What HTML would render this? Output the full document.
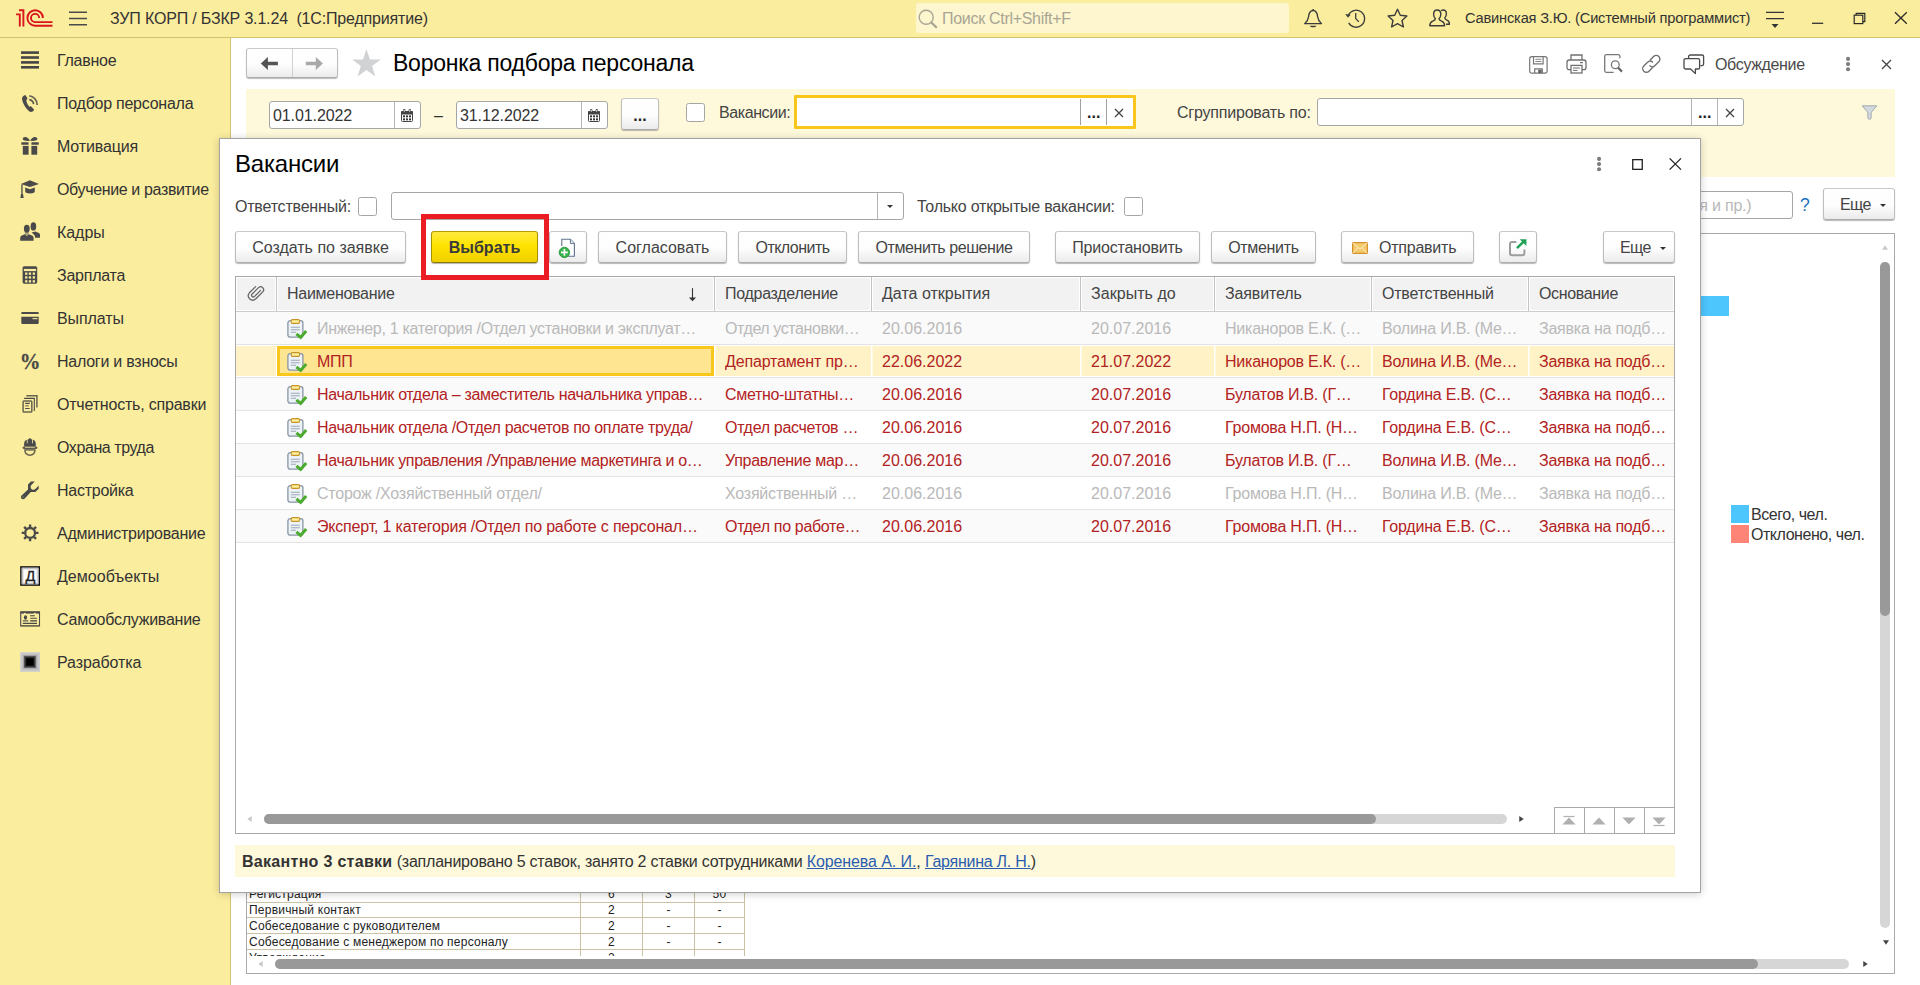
<!DOCTYPE html>
<html lang="ru">
<head>
<meta charset="utf-8">
<title>Воронка подбора персонала</title>
<style>
html,body{margin:0;padding:0}
body{width:1920px;height:985px;overflow:hidden;position:relative;background:#fff;font-family:"Liberation Sans",sans-serif;font-size:16px;color:#3f3f3f;line-height:18px}
.a{position:absolute;white-space:nowrap}
svg{position:absolute;overflow:visible}
/* top bar */
#top{left:0;top:0;width:1920px;height:37px;background:#fbed9e;border-bottom:1px solid #d2c170}
#side{left:0;top:38px;width:230px;height:947px;background:#fbed9e;border-right:1px solid #d3c274}
.sitem{left:57px;font-size:16px;color:#333}
/* buttons */
.btn{box-sizing:border-box;border:1px solid #c3c3c3;border-color:#c8c8c8 #bdbdbd #adadad;border-radius:3px;background:linear-gradient(#ffffff 0%,#fdfdfd 55%,#ebebeb 100%);box-shadow:0 1px 1px 0 rgba(0,0,0,0.28);color:#444;text-align:center;font-size:16px}
.inp{box-sizing:border-box;border:1px solid #a6a6a6;border-radius:3px;background:#fff}
.sep{width:1px;background:#b3b3b3}
.cb{box-sizing:border-box;border:1px solid #a6a6a6;border-radius:2.5px;background:#fff}
/* table */
.th{top:277px;height:34px;line-height:33px;color:#444}
.row{left:236px;width:1438px;height:33px;border-bottom:1px solid #e3e3e3;box-sizing:border-box}
.c{top:0;line-height:33px;height:32px}
.red{color:#b22222}
.gr{color:#b9b9b9}
</style>
</head>
<body>
<!-- ===== TOP BAR ===== -->
<div id="top" class="a">
<!-- 1C logo -->
<svg style="left:0;top:0" width="60" height="37" viewBox="0 0 60 37"><g fill="none" stroke="#d9141c" stroke-width="1.9"><path d="M19 10.2H23.4V26.6"/><path d="M16.1 14.4H19.8V26.6"/><path d="M42.9 18A7.75 7.75 0 1 0 35.1 25.75H52.5"/><path d="M39.2 18A4.1 4.1 0 1 0 35.1 22.1H52.5"/></g></svg>
<!-- hamburger -->
<svg style="left:69px;top:11px" width="18" height="15" viewBox="0 0 18 15"><g stroke="#4a4a4a" stroke-width="1.4"><path d="M0 1.2H18M0 7.5H18M0 13.8H18"/></g></svg>
<div class="a" id="apptitle" style="left:110px;top:10px;font-size:16px;color:#333;letter-spacing:-0.17px;white-space:pre">ЗУП КОРП / БЗКР 3.1.24  (1С:Предприятие)</div>
<!-- search -->
<div class="a" style="left:916px;top:3px;width:373px;height:30px;background:#fdf6cf;border-radius:3px"></div>
<svg style="left:918px;top:9px" width="20" height="20" viewBox="0 0 20 20"><circle cx="8.2" cy="8.2" r="7" fill="none" stroke="#a9a593" stroke-width="1.4"/><path d="M13.2 13.4L18.2 18.2" stroke="#a9a593" stroke-width="2.2" stroke-linecap="round"/></svg>
<div class="a" id="srch" style="left:942px;top:10px;font-size:16px;color:#a9a593;letter-spacing:-0.3px">Поиск Ctrl+Shift+F</div>
<!-- bell -->
<svg style="left:1304px;top:9px" width="19" height="19" viewBox="0 0 19 19"><path d="M0.7 14.7 C3 12.6 4.2 10.6 4.6 7.6 C5 3.6 6.6 1.5 9.1 1.5 C11.6 1.5 13.2 3.6 13.6 7.6 C14 10.6 15.2 12.6 17.5 14.7 Z" fill="none" stroke="#3c3c3c" stroke-width="1.3" stroke-linejoin="round"/><circle cx="9.1" cy="1" r="0.9" fill="#3c3c3c"/><path d="M5.8 16.7 H12.4 C11.6 18.8 6.6 18.8 5.8 16.7 Z" fill="#3c3c3c"/></svg>
<!-- history -->
<svg style="left:1345px;top:8px" width="21" height="20" viewBox="0 0 21 20"><path d="M3.3 7.4 A8.5 8.5 0 1 1 3.7 14.9" fill="none" stroke="#3c3c3c" stroke-width="1.3"/><path d="M0.2 6 L5.6 6.8 L3 9.8 Z" fill="#3c3c3c"/><path d="M10.7 5 V10.6 L13.8 13.8" fill="none" stroke="#3c3c3c" stroke-width="1.3"/></svg>
<!-- star -->
<svg style="left:1387px;top:8px" width="21" height="20" viewBox="0 0 21 20"><path d="M10.5 1.2 L13.3 7.3 L19.9 8 L15 12.5 L16.4 19 L10.5 15.7 L4.6 19 L6 12.5 L1.1 8 L7.7 7.3 Z" fill="none" stroke="#3c3c3c" stroke-width="1.4" stroke-linejoin="round"/></svg>
<!-- users -->
<svg style="left:1429px;top:9px" width="21" height="18" viewBox="0 0 21 18"><g fill="none" stroke="#3c3c3c" stroke-width="1.4" stroke-linejoin="round"><path d="M8.2 1 C10.6 1 11.8 2.8 11.8 5.2 C11.8 7.2 11 8.8 10 9.6 C10 11 10.8 11.6 12.6 12.2 C14.6 12.9 15.6 13.8 15.6 16.8 H0.8 C0.8 13.8 1.8 12.9 3.8 12.2 C5.6 11.6 6.4 11 6.4 9.6 C5.4 8.8 4.6 7.2 4.6 5.2 C4.6 2.8 5.8 1 8.2 1 Z"/><path d="M12.2 1.6 C12.8 1.2 13.4 1 14.2 1 C16.4 1 17.4 2.8 17.4 4.8 C17.4 6.6 16.8 8 15.8 8.8 C15.8 10 16.4 10.6 18 11.2 C19.6 11.8 20.4 12.6 20.4 15.2 H17"/></g></svg>
<div class="a" id="uname" style="left:1465px;top:9px;font-size:14.67px;color:#333;letter-spacing:-0.2px">Савинская З.Ю. (Системный программист)</div>
<!-- menu lines -->
<svg style="left:1766px;top:11px" width="18" height="17" viewBox="0 0 18 17"><path d="M0 1.4H18M0 7.6H18" stroke="#333" stroke-width="1.3"/><path d="M5.5 13.1H12.5L9 16.9Z" fill="#333"/></svg>
<!-- window controls -->
<svg style="left:1812px;top:22px" width="12" height="3" viewBox="0 0 12 3"><path d="M0 1.3H11.2" stroke="#333" stroke-width="1.3"/></svg>
<svg style="left:1853px;top:12px" width="13" height="13" viewBox="0 0 13 13"><g fill="none" stroke="#2a2a2a" stroke-width="1.2"><path d="M3.2 3V1.4H11.8V9.6H10"/><rect x="1.2" y="3.2" width="8.6" height="8.4"/></g></svg>
<svg style="left:1894px;top:11px" width="14" height="14" viewBox="0 0 14 14"><path d="M1 1.2L12.8 12.8M12.8 1.2L1 12.8" stroke="#2a2a2a" stroke-width="1.3"/></svg>
</div>
<!-- ===== SIDEBAR ===== -->
<div id="side" class="a"></div>
<svg style="left:20px;top:50px" width="21" height="21" viewBox="0 0 21 21"><g fill="#454545"><rect x="1" y="1.3" width="18" height="2.6"/><rect x="1" y="6.2" width="18" height="2.6"/><rect x="1" y="11.1" width="18" height="2.6"/><rect x="1" y="16" width="18" height="2.6"/></g></svg>
<div class="a sitem" style="top:52px;letter-spacing:-0.25px">Главное</div>
<svg style="left:20px;top:93px" width="21" height="21" viewBox="0 0 21 21"><path d="M5.4 2 L7.3 5.1 C7.6 5.8 7.2 6.5 6.3 7 C6.3 9 7.8 12 9.3 13.8 C10.2 13 11 13 11.5 13.8 L14 16.4 C14.2 17.6 12.4 18.9 10.6 18.9 C7 17.6 2.6 10.6 2 5.7 C2 4.2 3.6 2.2 5.4 2 Z" fill="#4a4a4a"/><path d="M9.3 6.7 A5.2 5.2 0 0 1 13.6 11.2" fill="none" stroke="#5f5b4c" stroke-width="1.7"/><path d="M9.3 2.9 A8.9 8.9 0 0 1 17.2 11.9" fill="none" stroke="#6b6755" stroke-width="1.7"/></svg>
<div class="a sitem" style="top:95px;letter-spacing:-0.25px">Подбор персонала</div>
<svg style="left:20px;top:136px" width="21" height="21" viewBox="0 0 21 21"><g fill="#4a4a4a"><rect x="1.3" y="6.2" width="7.3" height="2.6" rx="0.6"/><rect x="11.4" y="6.2" width="7.4" height="2.6" rx="0.6"/><rect x="2.8" y="9.9" width="5.8" height="8.8"/><rect x="11.4" y="9.9" width="5.8" height="8.8"/><path d="M10 4.8 C7 5 3 5 2.7 3 C2.5 1.2 5 0.4 6.6 1.2 C8.2 2 9.2 3.4 10 4.8 Z"/><path d="M10.1 4.8 C13.1 5 17.1 5 17.4 3 C17.6 1.2 15.1 0.4 13.5 1.2 C11.9 2 10.9 3.4 10.1 4.8 Z"/></g></svg>
<div class="a sitem" style="top:138px;letter-spacing:-0.15px">Мотивация</div>
<svg style="left:20px;top:179px" width="21" height="21" viewBox="0 0 21 21"><g fill="#4a4a4a"><path d="M1 5.1 L9.9 1.2 L19 4.9 L9.9 7.9 Z"/><path d="M5.2 8.6 L9.9 10.2 L14.8 8.6 V12.6 C14.8 15.2 5.2 15.2 5.2 12.6 Z"/><rect x="1.3" y="5.4" width="1.3" height="10"/><path d="M0.4 18.9 L1 15 H3 L3.7 18.9 Z"/></g></svg>
<div class="a sitem" style="top:181px;letter-spacing:-0.36px">Обучение и развитие</div>
<svg style="left:20px;top:222px" width="21" height="21" viewBox="0 0 21 21"><g fill="#4a4a4a"><ellipse cx="13.4" cy="4.4" rx="2.8" ry="4.2"/><path d="M11.6 10.6 C13 10.4 14.4 10 15.4 9.6 C17.4 10.6 20 11 20 12.8 V15.8 H15 V14.6 C15 13 13 12 11.6 10.6 Z"/><ellipse cx="6.8" cy="6.8" rx="2.9" ry="4"/><rect x="4.8" y="10.2" width="4" height="3.4" opacity="0.45"/><path d="M0.2 18.7 V15.4 C0.2 13.8 2.6 13.2 4.6 12.2 L6.8 14 L9 12.2 C11 13.2 13.6 13.8 13.6 15.4 V18.7 Z"/></g></svg>
<div class="a sitem" style="top:224px;letter-spacing:-0.05px">Кадры</div>
<svg style="left:20px;top:265px" width="21" height="21" viewBox="0 0 21 21"><rect x="2.6" y="1.2" width="14.6" height="17.5" rx="1.6" fill="#4a4a4a"/><g fill="#fbed9e"><rect x="3.9" y="3.9" width="12.2" height="2.2"/><rect x="5.1" y="7.5" width="2.3" height="2.3"/><rect x="5.1" y="11.3" width="2.3" height="2.3"/><rect x="5.1" y="15.2" width="2.3" height="2.3"/><rect x="8.8" y="7.5" width="2.3" height="2.3"/><rect x="8.8" y="11.3" width="2.3" height="2.3"/><rect x="8.8" y="15.2" width="2.3" height="2.3"/><rect x="12.7" y="7.5" width="2.3" height="2.3"/><rect x="12.7" y="11.3" width="2.3" height="2.3"/><rect x="12.7" y="15.2" width="2.3" height="2.3"/></g></svg>
<div class="a sitem" style="top:267px;letter-spacing:-0.25px">Зарплата</div>
<svg style="left:20px;top:308px" width="21" height="21" viewBox="0 0 21 21"><g fill="#4a4a4a"><path d="M2.1 4.1 H17.9 A0.8 0.8 0 0 1 18.7 4.9 V5.9 H1.3 V4.9 A0.8 0.8 0 0 1 2.1 4.1 Z"/><path d="M1.3 8.8 H18.7 V15.1 A0.8 0.8 0 0 1 17.9 15.9 H2.1 A0.8 0.8 0 0 1 1.3 15.1 Z"/></g><rect x="12.5" y="10.1" width="5" height="1.1" fill="#fbed9e"/></svg>
<div class="a sitem" style="top:310px;letter-spacing:-0.1px">Выплаты</div>
<svg style="left:20px;top:351px" width="21" height="21" viewBox="0 0 21 21"><text transform="translate(-0.3,17.8) scale(0.9,1)" font-family="Liberation Serif, serif" font-weight="bold" font-size="23" fill="#4a4a4a" stroke="#4a4a4a" stroke-width="0.3">%</text></svg>
<div class="a sitem" style="top:353px;letter-spacing:-0.25px">Налоги и взносы</div>
<svg style="left:20px;top:394px" width="21" height="21" viewBox="0 0 21 21"><g fill="none"><path d="M6.3 1.7 H16.9 V13.5" stroke="#69654f" stroke-width="1.5"/><path d="M4.1 4.4 H14.3 V17.1" stroke="#4a4a4a" stroke-width="1.1"/><rect x="3.1" y="6.9" width="8.7" height="11.1" rx="0.8" stroke="#69654f" stroke-width="1.5"/><path d="M5.2 9.3 H9.7 M5.2 14.5 H9.7" stroke="#4a4a4a" stroke-width="1.2"/><path d="M5.2 11.8 H8.8" stroke="#8a8468" stroke-width="1.4"/></g></svg>
<div class="a sitem" style="top:396px;letter-spacing:-0.2px">Отчетность, справки</div>
<svg style="left:20px;top:437px" width="21" height="21" viewBox="0 0 21 21"><path d="M4.1 9.6 V7 C4.1 4.6 5.4 3.2 6.8 2.8 V6.2 H7.6 V2.4 C8 2.2 8.6 2 9.1 1.9 V1.3 H10.7 V1.9 C11.2 2 11.8 2.2 12.2 2.4 V6.2 H13 V2.8 C14.4 3.2 15.8 4.6 15.8 7 V9.6 Z" fill="#4a4a4a"/><rect x="2.6" y="9.4" width="14.8" height="2.7" rx="1.3" fill="#5d5a4c"/><rect x="5" y="10.1" width="9.8" height="0.8" fill="#d9cf96"/><path d="M4.2 12 H15.6 L15.2 13.8 H4.6 Z" fill="#7a7560"/><path d="M4.7 13.2 C5.2 16.4 7.4 18.2 9.9 18.2 C12.4 18.2 14.6 16.4 15.1 13.2" fill="none" stroke="#6b6650" stroke-width="1.5"/></svg>
<div class="a sitem" style="top:439px;letter-spacing:-0.42px">Охрана труда</div>
<svg style="left:20px;top:480px" width="21" height="21" viewBox="0 0 21 21"><path d="M10.9 1.5 H14.8 L10.9 5.4 C10.2 7 10.8 8.6 12 9.4 C13.2 10.2 14.6 9.8 15.4 9 L18.7 5.4 V8.8 L15.4 12 H10.8 L5 18.3 C4 19.4 2.2 19.4 1.4 18.4 C0.6 17.4 0.8 16 1.8 15.2 L8 9.6 V4.4 Z" fill="#4a4a4a"/><circle cx="2.9" cy="17" r="0.8" fill="#8a8468"/></svg>
<div class="a sitem" style="top:482px;letter-spacing:-0.25px">Настройка</div>
<svg style="left:20px;top:523px" width="21" height="21" viewBox="0 0 21 21"><circle cx="10.1" cy="9.9" r="4.9" fill="none" stroke="#4a4a4a" stroke-width="2.3"/><path d="M15.70 9.90L18.50 9.90M14.06 13.86L16.04 15.84M10.10 15.50L10.10 18.30M6.14 13.86L4.16 15.84M4.50 9.90L1.70 9.90M6.14 5.94L4.16 3.96M10.10 4.30L10.10 1.50M14.06 5.94L16.04 3.96" stroke="#4a4a4a" stroke-width="2.4" fill="none"/></svg>
<div class="a sitem" style="top:525px;letter-spacing:-0.25px">Администрирование</div>
<svg style="left:20px;top:566px" width="21" height="21" viewBox="0 0 21 21"><rect x="0.95" y="0.95" width="18.3" height="18.1" fill="#fff" stroke="#0a0a0f" stroke-width="1.5"/><rect x="2.3" y="2.3" width="15.6" height="15.4" fill="none" stroke="#b5b5b5" stroke-width="1.2"/><rect x="3.3" y="3.3" width="13.6" height="13.4" fill="none" stroke="#e3e3e3" stroke-width="1"/><text x="10.3" y="15.2" text-anchor="middle" font-family="Liberation Sans, sans-serif" font-weight="normal" font-size="14.5" fill="#222" stroke="#222" stroke-width="0.3">Д</text></svg>
<div class="a sitem" style="top:568px;letter-spacing:0.02px">Демообъекты</div>
<svg style="left:20px;top:609px" width="21" height="21" viewBox="0 0 21 21"><rect x="0.7" y="2.8" width="18.8" height="14.1" fill="none" stroke="#4a4a4a" stroke-width="1.1"/><rect x="0.7" y="2.8" width="18.8" height="1.8" fill="#4a4a4a"/><rect x="0.7" y="16.2" width="18.8" height="1.2" fill="#69654f"/><circle cx="4.9" cy="4.8" r="1" fill="#fbed9e"/><circle cx="14.9" cy="4.8" r="1" fill="#fbed9e"/><ellipse cx="5.5" cy="8.5" rx="1.6" ry="2.3" fill="#4a4a4a"/><rect x="2.8" y="11.2" width="5.5" height="1.3" fill="#6b6755"/><path d="M10.2 9.3 H17 M2.8 14.4 H17" stroke="#4a4a4a" stroke-width="1.1"/><path d="M10.2 6.7 H14.8" stroke="#69654f" stroke-width="1.3"/><path d="M10.2 11.8 H17" stroke="#69654f" stroke-width="1.6"/></svg>
<div class="a sitem" style="top:611px;letter-spacing:-0.25px">Самообслуживание</div>
<svg style="left:20px;top:652px" width="21" height="21" viewBox="0 0 21 21"><rect x="0.2" y="0.2" width="19.8" height="19.6" fill="#cbcbd0"/><rect x="1.8" y="1.8" width="16.6" height="16.4" fill="#c2c2c2"/><rect x="3" y="3" width="14.2" height="14" fill="#ababab"/><rect x="3.9" y="3.9" width="12" height="12" fill="#5c5c5c"/><rect x="4.8" y="4.8" width="10.2" height="10.2" fill="#3a3a3a"/><rect x="5.7" y="5.7" width="8.4" height="8.4" fill="#161616"/><rect x="6.5" y="6.5" width="6.8" height="6.8" fill="#000"/></svg>
<div class="a sitem" style="top:654px;letter-spacing:-0.1px">Разработка</div>
<!-- ===== BACKGROUND FORM ===== -->
<div id="bg">
<!-- nav buttons -->
<div class="a btn" style="left:246px;top:48px;width:92px;height:30px"></div>
<div class="a" style="left:292px;top:49px;width:1px;height:28px;background:#d0d0d0"></div>
<svg style="left:260px;top:56px" width="19" height="15" viewBox="0 0 19 15"><path d="M0.8 7.5L7.9 1V5.8H17.9V9.2H7.9V14Z" fill="#555"/></svg>
<svg style="left:305px;top:56px" width="19" height="15" viewBox="0 0 19 15"><path d="M17.9 7.5L10.8 1V5.8H0.8V9.2H10.8V14Z" fill="#a9a9a9"/></svg>
<svg style="left:352px;top:49px" width="29" height="28" viewBox="0 0 29 28"><path d="M14.45 0.10L17.92 10.43L28.81 10.53L20.06 17.02L23.33 27.42L14.45 21.10L5.57 27.42L8.84 17.02L0.09 10.53L10.98 10.43Z" fill="#d0d2d3"/></svg>
<div class="a" id="ftitle" style="left:393px;top:50px;font-size:23px;line-height:26px;color:#000;letter-spacing:-0.23px">Воронка подбора персонала</div>
<!-- form toolbar icons -->
<svg style="left:1529px;top:56px" width="19" height="18" viewBox="0 0 19 18"><g fill="none" stroke="#777" stroke-width="1.2"><rect x="0.7" y="0.7" width="17.4" height="16.5" rx="2.2"/><path d="M4.5 0.7V7.8H14.1V0.7"/><path d="M6.4 3.3H12.4M6.4 5.5H12.4" stroke-width="0.9"/><path d="M5.7 17.2V12.9H13.3V17.2"/></g><rect x="9.2" y="13.6" width="3.5" height="3.6" fill="#666"/></svg>
<svg style="left:1566px;top:54px" width="21" height="20" viewBox="0 0 21 20"><g fill="none" stroke="#707070" stroke-width="1.3"><path d="M5 6V1H16V6"/><rect x="1" y="6" width="19" height="9.6" rx="2.2"/><rect x="5" y="11.4" width="11" height="7.6" fill="#fff"/><path d="M7 14H14M7 16.4H11.6" stroke-width="1"/><path d="M14 8.6H17" stroke-width="1.2"/></g></svg>
<svg style="left:1604px;top:54px" width="20" height="20" viewBox="0 0 20 20"><g fill="none" stroke="#777" stroke-width="1.3"><path d="M15.9 4.2V2.2A1.5 1.5 0 0 0 14.4 0.7H2.2A1.5 1.5 0 0 0 0.7 2.2V16.8A1.5 1.5 0 0 0 2.2 18.3H9.6"/><circle cx="11.3" cy="10.8" r="3.9"/><path d="M14 13.6L18 17.6" stroke-width="2.2" stroke="#666"/></g></svg>
<svg style="left:1641px;top:54px" width="21" height="20" viewBox="0 0 21 20"><g fill="none" stroke="#707070" stroke-width="1.4" stroke-linecap="round"><path d="M9.2 6 L12.6 2.6 A3.6 3.6 0 0 1 17.8 7.8 L14 11.6 A3.6 3.6 0 0 1 9 11.8"/><path d="M11.4 13.8 L8 17.2 A3.6 3.6 0 0 1 2.8 12 L6.6 8.2 A3.6 3.6 0 0 1 11.6 8"/></g></svg>
<svg style="left:1683px;top:54px" width="22" height="21" viewBox="0 0 22 21"><g fill="none" stroke="#4a4a4a" stroke-width="1.3" stroke-linejoin="round"><path d="M5.6 4.6 V2.6 A1.6 1.6 0 0 1 7.2 1 H19 A1.6 1.6 0 0 1 20.6 2.6 V10 A1.6 1.6 0 0 1 19 11.6 H17.4"/><path d="M2.6 4.6 H15 A1.6 1.6 0 0 1 16.6 6.2 V13.4 A1.6 1.6 0 0 1 15 15 H12.4 V19.6 L7.6 15 H2.6 A1.6 1.6 0 0 1 1 13.4 V6.2 A1.6 1.6 0 0 1 2.6 4.6 Z"/></g></svg>
<div class="a" id="obs" style="left:1715px;top:56px;color:#4a4a4a;letter-spacing:-0.35px">Обсуждение</div>
<svg style="left:1845px;top:57px" width="6" height="15" viewBox="0 0 6 15"><g fill="#7c7c7c"><circle cx="3.05" cy="1.9" r="2.05"/><circle cx="3.05" cy="7.1" r="2.05"/><circle cx="3.05" cy="12.2" r="2.05"/></g></svg>
<svg style="left:1881px;top:59px" width="11" height="11" viewBox="0 0 11 11"><path d="M1 1L10 10M10 1L1 10" stroke="#444" stroke-width="1.3"/></svg>
<!-- filter strip -->
<div class="a" style="left:246px;top:89px;width:1649px;height:88px;background:#fff9dc"></div>
<div class="a inp" style="left:269px;top:101px;width:152px;height:28px"></div>
<div class="a sep" style="left:394px;top:102px;height:26px"></div>
<div class="a" style="left:273px;top:107px;color:#333;letter-spacing:-0.1px">01.01.2022</div>
<svg style="left:401px;top:109px" width="12" height="13" viewBox="0 0 12 13"><rect x="0.5" y="2.5" width="11" height="10" rx="1" fill="#fff" stroke="#444" stroke-width="1"/><path d="M0 5.6V3A1 1 0 0 1 1 2H11A1 1 0 0 1 12 3V5.6Z" fill="#444"/><g fill="#444"><rect x="2" y="0" width="2.4" height="4" rx="1.2"/><rect x="7.6" y="0" width="2.4" height="4" rx="1.2"/></g><g fill="#fff"><rect x="2.8" y="0.8" width="0.8" height="2.2" rx="0.4"/><rect x="8.4" y="0.8" width="0.8" height="2.2" rx="0.4"/></g><g fill="#333"><rect x="2" y="6.4" width="2" height="1.9"/><rect x="5" y="6.4" width="2" height="1.9"/><rect x="8" y="6.4" width="2" height="1.9"/><rect x="2" y="9.4" width="2" height="1.9"/><rect x="5" y="9.4" width="2" height="1.9"/><rect x="8" y="9.4" width="2" height="1.9"/></g></svg>
<div class="a" style="left:434px;top:107px;color:#333">–</div>
<div class="a inp" style="left:456px;top:101px;width:152px;height:28px"></div>
<div class="a sep" style="left:581px;top:102px;height:26px"></div>
<div class="a" style="left:460px;top:107px;color:#333;letter-spacing:-0.1px">31.12.2022</div>
<svg style="left:588px;top:109px" width="12" height="13" viewBox="0 0 12 13"><rect x="0.5" y="2.5" width="11" height="10" rx="1" fill="#fff" stroke="#444" stroke-width="1"/><path d="M0 5.6V3A1 1 0 0 1 1 2H11A1 1 0 0 1 12 3V5.6Z" fill="#444"/><g fill="#444"><rect x="2" y="0" width="2.4" height="4" rx="1.2"/><rect x="7.6" y="0" width="2.4" height="4" rx="1.2"/></g><g fill="#fff"><rect x="2.8" y="0.8" width="0.8" height="2.2" rx="0.4"/><rect x="8.4" y="0.8" width="0.8" height="2.2" rx="0.4"/></g><g fill="#333"><rect x="2" y="6.4" width="2" height="1.9"/><rect x="5" y="6.4" width="2" height="1.9"/><rect x="8" y="6.4" width="2" height="1.9"/><rect x="2" y="9.4" width="2" height="1.9"/><rect x="5" y="9.4" width="2" height="1.9"/><rect x="8" y="9.4" width="2" height="1.9"/></g></svg>
<div class="a btn" style="left:621px;top:98px;width:38px;height:32px;line-height:33px;color:#222;font-weight:bold">...</div>
<div class="a cb" style="left:686px;top:103px;width:19px;height:19px"></div>
<div class="a" style="left:719px;top:104px;color:#444;letter-spacing:-0.42px">Вакансии:</div>
<div class="a" style="left:794px;top:95px;width:342px;height:34px;box-sizing:border-box;border:3px solid #f9c71c;border-radius:1px;background:#fff"></div>
<div class="a sep" style="left:1080px;top:99px;height:26px;background:#a0a0a0"></div>
<div class="a sep" style="left:1106px;top:99px;height:26px;background:#a0a0a0"></div>
<div class="a" style="left:1087px;top:104px;color:#222;font-weight:bold">...</div>
<svg style="left:1114px;top:108px" width="10" height="10" viewBox="0 0 10 10"><path d="M1 1L9 9M9 1L1 9" stroke="#444" stroke-width="1.3"/></svg>
<div class="a" style="left:1177px;top:104px;color:#444;letter-spacing:-0.2px">Сгруппировать по:</div>
<div class="a inp" style="left:1317px;top:98px;width:427px;height:28px"></div>
<div class="a sep" style="left:1691px;top:99px;height:26px"></div>
<div class="a sep" style="left:1717px;top:99px;height:26px"></div>
<div class="a" style="left:1698px;top:104px;color:#222;font-weight:bold">...</div>
<svg style="left:1725px;top:108px" width="10" height="10" viewBox="0 0 10 10"><path d="M1 1L9 9M9 1L1 9" stroke="#444" stroke-width="1.3"/></svg>
<svg style="left:1861px;top:105px" width="17" height="15" viewBox="0 0 17 15"><path d="M1.2 0.8H15.8L10.2 7.4V12.6A1.7 1.7 0 0 1 6.8 12.6V7.4Z" fill="#d3d9df" stroke="#9aa4ae" stroke-width="0.9" stroke-linejoin="round"/></svg>
<!-- bg search + more -->
<div class="a inp" style="left:1500px;top:191px;width:293px;height:28px"></div>
<div class="a" style="left:1597px;top:197px;color:#b8b8b8;letter-spacing:-0.2px">(наименования и пр.)</div>
<div class="a" style="left:1800px;top:196px;color:#1a70c0;font-size:17.5px">?</div>
<div class="a btn" style="left:1823px;top:188px;width:72px;height:32px;line-height:31px;text-align:left;padding-left:16px;color:#444;letter-spacing:-0.55px">Еще</div>
<svg style="left:1880px;top:204px" width="6" height="3" viewBox="0 0 8 4"><path d="M0 0H8L4 4Z" fill="#333"/></svg>
<!-- bg document area -->
<div class="a" style="left:246px;top:233px;width:1649px;height:741px;box-sizing:border-box;border:1px solid #a9a9a9;background:#fff"></div>
<div class="a" style="left:1600px;top:296px;width:129px;height:20px;background:#4dc6fd"></div>
<div class="a" style="left:1731px;top:505px;width:18px;height:18px;background:#4dc6fd"></div>
<div class="a" style="left:1731px;top:525px;width:18px;height:18px;background:#fd8477"></div>
<div class="a" style="left:1751px;top:506px;color:#333;letter-spacing:-0.45px">Всего, чел.</div>
<div class="a" style="left:1751px;top:526px;color:#333;letter-spacing:-0.45px">Отклонено, чел.</div>
<!-- bg scrollbars -->
<svg style="left:1882px;top:245px" width="6" height="5" viewBox="0 0 8 6"><path d="M0 6H8L4 0Z" fill="#c9c9c9"/></svg>
<div class="a" style="left:1880px;top:262px;width:10px;height:666px;border-radius:5px;background:#d6d6d6"></div>
<div class="a" style="left:1880px;top:262px;width:10px;height:354px;border-radius:5px;background:#999"></div>
<svg style="left:1883px;top:940px" width="6" height="5" viewBox="0 0 8 6"><path d="M0 0H8L4 6Z" fill="#444"/></svg>
<svg style="left:258px;top:961px" width="5" height="6" viewBox="0 0 6 8"><path d="M6 0V8L0 4Z" fill="#c9c9c9"/></svg>
<div class="a" style="left:275px;top:959px;width:1574px;height:10px;border-radius:5px;background:#d6d6d6"></div>
<div class="a" style="left:275px;top:959px;width:1483px;height:10px;border-radius:5px;background:#999"></div>
<svg style="left:1863px;top:961px" width="5" height="6" viewBox="0 0 6 8"><path d="M0 0V8L6 4Z" fill="#444"/></svg>
<!-- bg spreadsheet -->
<div class="a" id="sheet" style="left:247px;top:885px;width:520px;height:71px;overflow:hidden;font-size:12px;line-height:14px;color:#222;letter-spacing:0.22px">
<div class="a" style="left:0;top:0;width:497px;height:16px;border-top:1px solid #cbc2a4;border-bottom:1px solid #cbc2a4"></div>
<div class="a" style="left:0;top:32px;width:497px;height:15px;border-top:1px solid #cbc2a4;border-bottom:1px solid #cbc2a4"></div>
<div class="a" style="left:0;top:64px;width:497px;height:15px;border-top:1px solid #cbc2a4"></div>
<div class="a" style="left:333px;top:0;width:1px;height:80px;background:#cbc2a4"></div>
<div class="a" style="left:395px;top:0;width:1px;height:80px;background:#cbc2a4"></div>
<div class="a" style="left:447px;top:0;width:1px;height:80px;background:#cbc2a4"></div>
<div class="a" style="left:497px;top:0;width:1px;height:80px;background:#cbc2a4"></div>
<div class="a" style="left:2px;top:2px">Регистрация</div><div class="a" style="left:334px;top:2px;width:61px;text-align:center">6</div><div class="a" style="left:396px;top:2px;width:51px;text-align:center">3</div><div class="a" style="left:448px;top:2px;width:49px;text-align:center">50</div>
<div class="a" style="left:2px;top:18px">Первичный контакт</div><div class="a" style="left:334px;top:18px;width:61px;text-align:center">2</div><div class="a" style="left:396px;top:18px;width:51px;text-align:center">-</div><div class="a" style="left:448px;top:18px;width:49px;text-align:center">-</div>
<div class="a" style="left:2px;top:34px">Собеседование с руководителем</div><div class="a" style="left:334px;top:34px;width:61px;text-align:center">2</div><div class="a" style="left:396px;top:34px;width:51px;text-align:center">-</div><div class="a" style="left:448px;top:34px;width:49px;text-align:center">-</div>
<div class="a" style="left:2px;top:50px">Собеседование с менеджером по персоналу</div><div class="a" style="left:334px;top:50px;width:61px;text-align:center">2</div><div class="a" style="left:396px;top:50px;width:51px;text-align:center">-</div><div class="a" style="left:448px;top:50px;width:49px;text-align:center">-</div>
<div class="a" style="left:2px;top:66px">Утверждение</div><div class="a" style="left:334px;top:66px;width:61px;text-align:center">2</div><div class="a" style="left:396px;top:66px;width:51px;text-align:center">-</div><div class="a" style="left:448px;top:66px;width:49px;text-align:center">-</div>
</div>
</div>
<!-- ===== DIALOG ===== -->
<div id="dlg">
<div class="a" style="left:219px;top:138px;width:1482px;height:755px;box-sizing:border-box;border:1px solid #a3a3a3;background:#fff;box-shadow:0 1px 8px rgba(0,0,0,0.2)"></div>
<div class="a" id="dtitle" style="left:235px;top:151px;font-size:24px;line-height:26px;color:#000;letter-spacing:-0.2px">Вакансии</div>
<svg style="left:1596px;top:157px" width="6" height="15" viewBox="0 0 6 15"><g fill="#7c7c7c"><circle cx="3.05" cy="1.9" r="2.05"/><circle cx="3.05" cy="7.1" r="2.05"/><circle cx="3.05" cy="12.2" r="2.05"/></g></svg>
<svg style="left:1632px;top:159px" width="12" height="11" viewBox="0 0 12 11"><rect x="0.75" y="0.65" width="9.5" height="9.7" fill="none" stroke="#222" stroke-width="1.3"/></svg>
<svg style="left:1669px;top:158px" width="13" height="12" viewBox="0 0 13 12"><path d="M0.6 0.4L12 11.6M12 0.4L0.6 11.6" stroke="#222" stroke-width="1.3"/></svg>
<div class="a" style="left:235px;top:198px;color:#444;letter-spacing:-0.2px">Ответственный:</div>
<div class="a cb" style="left:358px;top:197px;width:19px;height:19px"></div>
<div class="a inp" style="left:391px;top:192px;width:513px;height:28px"></div>
<div class="a sep" style="left:877px;top:193px;height:26px"></div>
<svg style="left:887px;top:205px" width="6" height="3" viewBox="0 0 8 4"><path d="M0 0H8L4 4Z" fill="#333"/></svg>
<div class="a" style="left:917px;top:198px;color:#444;letter-spacing:-0.22px">Только открытые вакансии:</div>
<div class="a cb" style="left:1124px;top:197px;width:19px;height:19px"></div>
<div class="a btn" style="left:235px;top:231px;width:171px;height:32px;line-height:31px;letter-spacing:0px">Создать по заявке</div>
<div class="a btn" style="left:598px;top:231px;width:129px;height:32px;line-height:31px;letter-spacing:0px">Согласовать</div>
<div class="a btn" style="left:738px;top:231px;width:109px;height:32px;line-height:31px;letter-spacing:-0.53px">Отклонить</div>
<div class="a btn" style="left:858px;top:231px;width:172px;height:32px;line-height:31px;letter-spacing:-0.43px">Отменить решение</div>
<div class="a btn" style="left:1055px;top:231px;width:145px;height:32px;line-height:31px;letter-spacing:-0.2px">Приостановить</div>
<div class="a btn" style="left:1211px;top:231px;width:105px;height:32px;line-height:31px;letter-spacing:-0.33px">Отменить</div>
<div class="a btn" style="left:431px;top:231px;width:107px;height:32px;line-height:31px;font-weight:bold;color:#3a3a3a;background:linear-gradient(#ffea3e 0%,#ffe400 45%,#f0cf00 100%);border-color:#b39b00 #a89100 #8e7a00;box-shadow:0 1px 1px 0 rgba(0,0,0,0.3);letter-spacing:0px">Выбрать</div>
<div class="a" style="left:421px;top:214px;width:128px;height:66px;box-sizing:border-box;border:5px solid #ec1c24;z-index:5"></div>
<div class="a btn" style="left:549px;top:231px;width:38px;height:32px"></div>
<svg style="left:558px;top:237px" width="18" height="21" viewBox="0 0 18 21"><path d="M3.8 9V2.3H12.4L16.4 6.4V19.2H10" fill="#fff" stroke="#5f728c" stroke-width="1.1"/><path d="M12.4 2.3V6.4H16.4" fill="#eef2f6" stroke="#5f728c" stroke-width="1"/><circle cx="6.4" cy="15.4" r="5.2" fill="#3db34f" stroke="#1f9636" stroke-width="0.9"/><path d="M6.4 12V18.8M3 15.4H9.8" stroke="#fff" stroke-width="1.6"/></svg>
<div class="a btn" style="left:1341px;top:231px;width:133px;height:32px;line-height:31px;text-align:left;padding-left:37px;letter-spacing:-0.23px">Отправить</div>
<svg style="left:1352px;top:242px" width="16" height="12" viewBox="0 0 16 12"><rect x="0.6" y="0.6" width="14.8" height="10.8" rx="1" fill="#f6c96c" stroke="#d4922a" stroke-width="1.2"/><path d="M1 1L8 7L15 1M1 11L6 5.6M15 11L10 5.6" fill="none" stroke="#fdf0d0" stroke-width="1"/></svg>
<div class="a btn" style="left:1499px;top:231px;width:38px;height:32px"></div>
<svg style="left:1508px;top:238px" width="20" height="20" viewBox="0 0 20 20"><path d="M8.4 3.9H4A2 2 0 0 0 2 5.9V15.3A2 2 0 0 0 4 17.3H14.4A2 2 0 0 0 16.4 15.3V11.6" fill="none" stroke="#9d9d9d" stroke-width="2"/><path d="M9 10.2L16.4 2.8" fill="none" stroke="#1fa055" stroke-width="2.4"/><path d="M11.6 1.2H18.4V8Z" fill="#1fa055"/></svg>
<div class="a btn" style="left:1603px;top:231px;width:72px;height:32px;line-height:31px;text-align:left;padding-left:16px;color:#444;letter-spacing:-0.55px">Еще</div>
<svg style="left:1660px;top:247px" width="6" height="3" viewBox="0 0 8 4"><path d="M0 0H8L4 4Z" fill="#333"/></svg>
<div class="a" style="left:235px;top:276px;width:1440px;height:558px;box-sizing:border-box;border:1px solid #a9a9a9;background:#fff"></div>
<div class="a" style="left:236px;top:277px;width:1438px;height:34px;background:#f2f2f2;border-bottom:1px solid #cdcdcd;box-shadow:inset 0 0 0 1px #fff"></div>
<div class="a" style="left:275px;top:277px;width:3px;height:34px;background:linear-gradient(90deg,#fff 0,#fff 1px,#c4c4c4 1px,#c4c4c4 2px,#fff 2px,#fff 3px)"></div>
<div class="a" style="left:713px;top:277px;width:3px;height:34px;background:linear-gradient(90deg,#fff 0,#fff 1px,#c4c4c4 1px,#c4c4c4 2px,#fff 2px,#fff 3px)"></div>
<div class="a" style="left:870px;top:277px;width:3px;height:34px;background:linear-gradient(90deg,#fff 0,#fff 1px,#c4c4c4 1px,#c4c4c4 2px,#fff 2px,#fff 3px)"></div>
<div class="a" style="left:1079px;top:277px;width:3px;height:34px;background:linear-gradient(90deg,#fff 0,#fff 1px,#c4c4c4 1px,#c4c4c4 2px,#fff 2px,#fff 3px)"></div>
<div class="a" style="left:1213px;top:277px;width:3px;height:34px;background:linear-gradient(90deg,#fff 0,#fff 1px,#c4c4c4 1px,#c4c4c4 2px,#fff 2px,#fff 3px)"></div>
<div class="a" style="left:1370px;top:277px;width:3px;height:34px;background:linear-gradient(90deg,#fff 0,#fff 1px,#c4c4c4 1px,#c4c4c4 2px,#fff 2px,#fff 3px)"></div>
<div class="a" style="left:1527px;top:277px;width:3px;height:34px;background:linear-gradient(90deg,#fff 0,#fff 1px,#c4c4c4 1px,#c4c4c4 2px,#fff 2px,#fff 3px)"></div>
<div class="a th" style="left:287px;letter-spacing:-0.28px">Наименование</div>
<div class="a th" style="left:725px;letter-spacing:-0.28px">Подразделение</div>
<div class="a th" style="left:882px;letter-spacing:0px">Дата открытия</div>
<div class="a th" style="left:1091px;letter-spacing:0.05px">Закрыть до</div>
<div class="a th" style="left:1225px;letter-spacing:-0.12px">Заявитель</div>
<div class="a th" style="left:1382px;letter-spacing:-0.2px">Ответственный</div>
<div class="a th" style="left:1539px;letter-spacing:-0.34px">Основание</div>
<svg style="left:248px;top:285px" width="16" height="17" viewBox="0 0 16 17"><path d="M12.6 5.4L6.4 11.6A1.7 1.7 0 0 1 4 9.2L10.8 2.4A3 3 0 0 1 15 6.6L7.6 14A4.4 4.4 0 0 1 1.4 7.8L7.6 1.6" fill="none" stroke="#666" stroke-width="1.3" stroke-linecap="round"/></svg>
<svg style="left:688px;top:288px" width="9" height="14" viewBox="0 0 9 14"><path d="M4.5 0.2V10" fill="none" stroke="#333" stroke-width="1.1"/><path d="M0.9 9.4H8.1L4.5 13.3Z" fill="#333"/></svg>
<div class="a row" style="top:312px;background:#fafafa"></div>
<svg style="left:287px;top:319px" width="21" height="21" viewBox="0 0 21 21"><rect x="0.9" y="1.7" width="15" height="16.5" rx="2.2" fill="#edf2f7" stroke="#8895a5" stroke-width="1.3"/><rect x="4.2" y="0.6" width="8.4" height="3.8" rx="1.3" fill="#fbf29a" stroke="#c8922a" stroke-width="1.1"/><path d="M3.8 8.2H12.8M3.8 10.7H12.8M3.8 13.3H9" stroke="#9aa8b6" stroke-width="1.1"/><path d="M9.4 14.8L13.6 18.4L19.2 12" fill="none" stroke="#4bab2d" stroke-width="3"/></svg>
<div class="a c gr" style="left:317px;top:312px;width:395px;overflow:hidden;letter-spacing:-0.31px">Инженер, 1 категория /Отдел установки и эксплуат…</div>
<div class="a c gr" style="left:725px;top:312px;width:145px;overflow:hidden;letter-spacing:-0.4px">Отдел установки…</div>
<div class="a c gr" style="left:882px;top:312px;width:190px;overflow:hidden;letter-spacing:0px">20.06.2016</div>
<div class="a c gr" style="left:1091px;top:312px;width:120px;overflow:hidden;letter-spacing:0px">20.07.2016</div>
<div class="a c gr" style="left:1225px;top:312px;width:145px;overflow:hidden;letter-spacing:-0.22px">Никаноров Е.К. (…</div>
<div class="a c gr" style="left:1382px;top:312px;width:145px;overflow:hidden;letter-spacing:-0.22px">Волина И.В. (Ме…</div>
<div class="a c gr" style="left:1539px;top:312px;width:135px;overflow:hidden;letter-spacing:-0.22px">Заявка на подб…</div>
<div class="a row" style="top:345px;background:#fff"></div><div class="a" style="left:236px;top:346px;width:1438px;height:30px;background:#fff2c6"></div><div class="a" style="left:276px;top:346px;width:1px;height:30px;background:#fff"></div>
<div class="a" style="left:277px;top:346px;width:437px;height:30px;box-sizing:border-box;border:3px solid #f9c71c;background:#fee591"></div>
<div class="a" style="left:714px;top:346px;width:1px;height:30px;background:#fff;border-right:1px solid #fff8e2"></div>
<div class="a" style="left:871px;top:346px;width:1px;height:30px;background:#fff;border-right:1px solid #fff8e2"></div>
<div class="a" style="left:1080px;top:346px;width:1px;height:30px;background:#fff;border-right:1px solid #fff8e2"></div>
<div class="a" style="left:1214px;top:346px;width:1px;height:30px;background:#fff;border-right:1px solid #fff8e2"></div>
<div class="a" style="left:1371px;top:346px;width:1px;height:30px;background:#fff;border-right:1px solid #fff8e2"></div>
<div class="a" style="left:1528px;top:346px;width:1px;height:30px;background:#fff;border-right:1px solid #fff8e2"></div>
<svg style="left:287px;top:352px" width="21" height="21" viewBox="0 0 21 21"><rect x="0.9" y="1.7" width="15" height="16.5" rx="2.2" fill="#edf2f7" stroke="#8895a5" stroke-width="1.3"/><rect x="4.2" y="0.6" width="8.4" height="3.8" rx="1.3" fill="#fbf29a" stroke="#c8922a" stroke-width="1.1"/><path d="M3.8 8.2H12.8M3.8 10.7H12.8M3.8 13.3H9" stroke="#9aa8b6" stroke-width="1.1"/><path d="M9.4 14.8L13.6 18.4L19.2 12" fill="none" stroke="#4bab2d" stroke-width="3"/></svg>
<div class="a c red" style="left:317px;top:345px;width:395px;overflow:hidden;letter-spacing:-0.31px">МПП</div>
<div class="a c red" style="left:725px;top:345px;width:145px;overflow:hidden;letter-spacing:-0.16px">Департамент пр…</div>
<div class="a c red" style="left:882px;top:345px;width:190px;overflow:hidden;letter-spacing:0px">22.06.2022</div>
<div class="a c red" style="left:1091px;top:345px;width:120px;overflow:hidden;letter-spacing:0px">21.07.2022</div>
<div class="a c red" style="left:1225px;top:345px;width:145px;overflow:hidden;letter-spacing:-0.22px">Никаноров Е.К. (…</div>
<div class="a c red" style="left:1382px;top:345px;width:145px;overflow:hidden;letter-spacing:-0.22px">Волина И.В. (Ме…</div>
<div class="a c red" style="left:1539px;top:345px;width:135px;overflow:hidden;letter-spacing:-0.22px">Заявка на подб…</div>
<div class="a row" style="top:378px;background:#fafafa"></div>
<svg style="left:287px;top:385px" width="21" height="21" viewBox="0 0 21 21"><rect x="0.9" y="1.7" width="15" height="16.5" rx="2.2" fill="#edf2f7" stroke="#8895a5" stroke-width="1.3"/><rect x="4.2" y="0.6" width="8.4" height="3.8" rx="1.3" fill="#fbf29a" stroke="#c8922a" stroke-width="1.1"/><path d="M3.8 8.2H12.8M3.8 10.7H12.8M3.8 13.3H9" stroke="#9aa8b6" stroke-width="1.1"/><path d="M9.4 14.8L13.6 18.4L19.2 12" fill="none" stroke="#4bab2d" stroke-width="3"/></svg>
<div class="a c red" style="left:317px;top:378px;width:395px;overflow:hidden;letter-spacing:-0.31px">Начальник отдела – заместитель начальника управ…</div>
<div class="a c red" style="left:725px;top:378px;width:145px;overflow:hidden;letter-spacing:-0.33px">Сметно-штатны…</div>
<div class="a c red" style="left:882px;top:378px;width:190px;overflow:hidden;letter-spacing:0px">20.06.2016</div>
<div class="a c red" style="left:1091px;top:378px;width:120px;overflow:hidden;letter-spacing:0px">20.07.2016</div>
<div class="a c red" style="left:1225px;top:378px;width:145px;overflow:hidden;letter-spacing:-0.22px">Булатов И.В. (Г…</div>
<div class="a c red" style="left:1382px;top:378px;width:145px;overflow:hidden;letter-spacing:-0.22px">Гордина Е.В. (С…</div>
<div class="a c red" style="left:1539px;top:378px;width:135px;overflow:hidden;letter-spacing:-0.22px">Заявка на подб…</div>
<div class="a row" style="top:411px;background:#fff"></div>
<svg style="left:287px;top:418px" width="21" height="21" viewBox="0 0 21 21"><rect x="0.9" y="1.7" width="15" height="16.5" rx="2.2" fill="#edf2f7" stroke="#8895a5" stroke-width="1.3"/><rect x="4.2" y="0.6" width="8.4" height="3.8" rx="1.3" fill="#fbf29a" stroke="#c8922a" stroke-width="1.1"/><path d="M3.8 8.2H12.8M3.8 10.7H12.8M3.8 13.3H9" stroke="#9aa8b6" stroke-width="1.1"/><path d="M9.4 14.8L13.6 18.4L19.2 12" fill="none" stroke="#4bab2d" stroke-width="3"/></svg>
<div class="a c red" style="left:317px;top:411px;width:395px;overflow:hidden;letter-spacing:-0.31px">Начальник отдела /Отдел расчетов по оплате труда/</div>
<div class="a c red" style="left:725px;top:411px;width:145px;overflow:hidden;letter-spacing:-0.31px">Отдел расчетов …</div>
<div class="a c red" style="left:882px;top:411px;width:190px;overflow:hidden;letter-spacing:0px">20.06.2016</div>
<div class="a c red" style="left:1091px;top:411px;width:120px;overflow:hidden;letter-spacing:0px">20.07.2016</div>
<div class="a c red" style="left:1225px;top:411px;width:145px;overflow:hidden;letter-spacing:-0.22px">Громова Н.П. (Н…</div>
<div class="a c red" style="left:1382px;top:411px;width:145px;overflow:hidden;letter-spacing:-0.22px">Гордина Е.В. (С…</div>
<div class="a c red" style="left:1539px;top:411px;width:135px;overflow:hidden;letter-spacing:-0.22px">Заявка на подб…</div>
<div class="a row" style="top:444px;background:#fafafa"></div>
<svg style="left:287px;top:451px" width="21" height="21" viewBox="0 0 21 21"><rect x="0.9" y="1.7" width="15" height="16.5" rx="2.2" fill="#edf2f7" stroke="#8895a5" stroke-width="1.3"/><rect x="4.2" y="0.6" width="8.4" height="3.8" rx="1.3" fill="#fbf29a" stroke="#c8922a" stroke-width="1.1"/><path d="M3.8 8.2H12.8M3.8 10.7H12.8M3.8 13.3H9" stroke="#9aa8b6" stroke-width="1.1"/><path d="M9.4 14.8L13.6 18.4L19.2 12" fill="none" stroke="#4bab2d" stroke-width="3"/></svg>
<div class="a c red" style="left:317px;top:444px;width:395px;overflow:hidden;letter-spacing:-0.31px">Начальник управления /Управление маркетинга и о…</div>
<div class="a c red" style="left:725px;top:444px;width:145px;overflow:hidden;letter-spacing:-0.29px">Управление мар…</div>
<div class="a c red" style="left:882px;top:444px;width:190px;overflow:hidden;letter-spacing:0px">20.06.2016</div>
<div class="a c red" style="left:1091px;top:444px;width:120px;overflow:hidden;letter-spacing:0px">20.07.2016</div>
<div class="a c red" style="left:1225px;top:444px;width:145px;overflow:hidden;letter-spacing:-0.22px">Булатов И.В. (Г…</div>
<div class="a c red" style="left:1382px;top:444px;width:145px;overflow:hidden;letter-spacing:-0.22px">Волина И.В. (Ме…</div>
<div class="a c red" style="left:1539px;top:444px;width:135px;overflow:hidden;letter-spacing:-0.22px">Заявка на подб…</div>
<div class="a row" style="top:477px;background:#fff"></div>
<svg style="left:287px;top:484px" width="21" height="21" viewBox="0 0 21 21"><rect x="0.9" y="1.7" width="15" height="16.5" rx="2.2" fill="#edf2f7" stroke="#8895a5" stroke-width="1.3"/><rect x="4.2" y="0.6" width="8.4" height="3.8" rx="1.3" fill="#fbf29a" stroke="#c8922a" stroke-width="1.1"/><path d="M3.8 8.2H12.8M3.8 10.7H12.8M3.8 13.3H9" stroke="#9aa8b6" stroke-width="1.1"/><path d="M9.4 14.8L13.6 18.4L19.2 12" fill="none" stroke="#4bab2d" stroke-width="3"/></svg>
<div class="a c gr" style="left:317px;top:477px;width:395px;overflow:hidden;letter-spacing:-0.22px">Сторож /Хозяйственный отдел/</div>
<div class="a c gr" style="left:725px;top:477px;width:145px;overflow:hidden;letter-spacing:-0.21px">Хозяйственный …</div>
<div class="a c gr" style="left:882px;top:477px;width:190px;overflow:hidden;letter-spacing:0px">20.06.2016</div>
<div class="a c gr" style="left:1091px;top:477px;width:120px;overflow:hidden;letter-spacing:0px">20.07.2016</div>
<div class="a c gr" style="left:1225px;top:477px;width:145px;overflow:hidden;letter-spacing:-0.22px">Громова Н.П. (Н…</div>
<div class="a c gr" style="left:1382px;top:477px;width:145px;overflow:hidden;letter-spacing:-0.22px">Волина И.В. (Ме…</div>
<div class="a c gr" style="left:1539px;top:477px;width:135px;overflow:hidden;letter-spacing:-0.22px">Заявка на подб…</div>
<div class="a row" style="top:510px;background:#fafafa"></div>
<svg style="left:287px;top:517px" width="21" height="21" viewBox="0 0 21 21"><rect x="0.9" y="1.7" width="15" height="16.5" rx="2.2" fill="#edf2f7" stroke="#8895a5" stroke-width="1.3"/><rect x="4.2" y="0.6" width="8.4" height="3.8" rx="1.3" fill="#fbf29a" stroke="#c8922a" stroke-width="1.1"/><path d="M3.8 8.2H12.8M3.8 10.7H12.8M3.8 13.3H9" stroke="#9aa8b6" stroke-width="1.1"/><path d="M9.4 14.8L13.6 18.4L19.2 12" fill="none" stroke="#4bab2d" stroke-width="3"/></svg>
<div class="a c red" style="left:317px;top:510px;width:395px;overflow:hidden;letter-spacing:-0.19px">Эксперт, 1 категория /Отдел по работе с персонал…</div>
<div class="a c red" style="left:725px;top:510px;width:145px;overflow:hidden;letter-spacing:-0.32px">Отдел по работе…</div>
<div class="a c red" style="left:882px;top:510px;width:190px;overflow:hidden;letter-spacing:0px">20.06.2016</div>
<div class="a c red" style="left:1091px;top:510px;width:120px;overflow:hidden;letter-spacing:0px">20.07.2016</div>
<div class="a c red" style="left:1225px;top:510px;width:145px;overflow:hidden;letter-spacing:-0.22px">Громова Н.П. (Н…</div>
<div class="a c red" style="left:1382px;top:510px;width:145px;overflow:hidden;letter-spacing:-0.22px">Гордина Е.В. (С…</div>
<div class="a c red" style="left:1539px;top:510px;width:135px;overflow:hidden;letter-spacing:-0.22px">Заявка на подб…</div>
<svg style="left:247px;top:816px" width="5" height="6" viewBox="0 0 6 8"><path d="M6 0V8L0 4Z" fill="#c9c9c9"/></svg>
<div class="a" style="left:264px;top:814px;width:1243px;height:10px;border-radius:5px;background:#d6d6d6"></div>
<div class="a" style="left:264px;top:814px;width:1112px;height:10px;border-radius:5px;background:#999"></div>
<svg style="left:1519px;top:816px" width="5" height="6" viewBox="0 0 6 8"><path d="M0 0V8L6 4Z" fill="#444"/></svg>
<div class="a" style="left:1554px;top:807px;width:121px;height:27px;box-sizing:border-box;border:1px solid #a9a9a9;background:#fff"></div>
<div class="a" style="left:1584px;top:808px;width:1px;height:25px;background:#a9a9a9"></div>
<div class="a" style="left:1614px;top:808px;width:1px;height:25px;background:#a9a9a9"></div>
<div class="a" style="left:1644px;top:808px;width:1px;height:25px;background:#a9a9a9"></div>
<svg style="left:1562px;top:816px" width="14" height="9" viewBox="0 0 14 9"><path d="M1.5 0.5H12.5" stroke="#b0b0b0" stroke-width="1.2"/><path d="M0.4 8.6L7 1.6L13.6 8.6Z" fill="#b0b0b0"/></svg>
<svg style="left:1592px;top:817px" width="14" height="8" viewBox="0 0 14 8"><path d="M0.4 7.6L7 0.6L13.6 7.6Z" fill="#b0b0b0"/></svg>
<svg style="left:1622px;top:817px" width="14" height="8" viewBox="0 0 14 8"><path d="M0.4 0.4L7 7.4L13.6 0.4Z" fill="#b0b0b0"/></svg>
<svg style="left:1652px;top:817px" width="14" height="9" viewBox="0 0 14 9"><path d="M1.5 8.5H12.5" stroke="#b0b0b0" stroke-width="1.2"/><path d="M0.4 0.4L7 7.4L13.6 0.4Z" fill="#b0b0b0"/></svg>
<div class="a" style="left:235px;top:845px;width:1440px;height:32px;background:#fff9dc"></div>
<div class="a" id="stat" style="left:242px;top:853px;color:#333;letter-spacing:-0.1px"><b style="letter-spacing:0.3px">Вакантно 3 ставки</b><i style="font-style:normal;letter-spacing:-0.23px"> (запланировано 5 ставок, занято 2 ставки сотрудниками </i><span style="color:#2a5db0;text-decoration:underline">Коренева А. И.</span>, <span style="color:#2a5db0;text-decoration:underline;letter-spacing:-0.26px">Гарянина Л. Н.</span>)</div>
</div>
</body>
</html>
